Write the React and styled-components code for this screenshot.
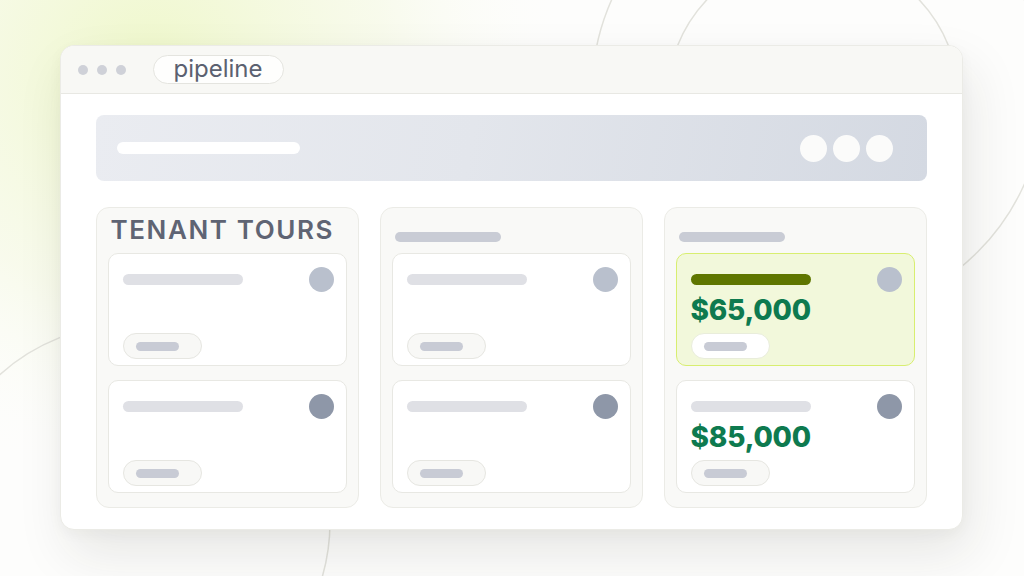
import React from "react";
import styled, { createGlobalStyle } from "styled-components";

const GlobalStyle = createGlobalStyle`
  * { box-sizing: border-box; }
  html, body { margin: 0; padding: 0; }
  body {
    font-family: Inter, "Noto Sans", "Liberation Sans", sans-serif;
    background: #fdfdfc;
  }
`;

const columns = [
  {
    title: "TENANT TOURS",
    cards: [{ dot: "#b9c0cd" }, { dot: "#8e97a8" }],
  },
  {
    cards: [{ dot: "#b9c0cd" }, { dot: "#8e97a8" }],
  },
  {
    cards: [
      { dot: "#b9c0cd", amount: "$65,000", active: true },
      { dot: "#8e97a8", amount: "$85,000" },
    ],
  },
];

const Backdrop = () => (
  <BackdropSvg viewBox="0 0 1024 576" preserveAspectRatio="none">
    <defs>
      <radialGradient id="glow" cx="150" cy="70" r="430" gradientUnits="userSpaceOnUse">
        <stop offset="0" stopColor="#edf7c4" stopOpacity="0.9" />
        <stop offset="0.55" stopColor="#f3f8dc" stopOpacity="0.5" />
        <stop offset="1" stopColor="#ffffff" stopOpacity="0" />
      </radialGradient>
    </defs>
    <rect x="0" y="0" width="1024" height="576" fill="url(#glow)" />
    <g fill="none" stroke="#e2e2dc" strokeWidth="1.5">
      <circle cx="813" cy="100" r="146" />
      <circle cx="818" cy="92" r="226" />
      <circle cx="132" cy="522" r="198" />
    </g>
  </BackdropSvg>
);

const Card = ({ dot, amount, active }) => (
  <CardBox $active={active}>
    <CardTop>
      <Bar $w={120} $h={11} $color={active ? "#5f7600" : "#dfe0e5"} />
      <Dot $size={25} $color={dot} />
    </CardTop>
    {amount && <Amount>{amount}</Amount>}
    <Chip $active={active}>
      <Bar $w={43} $h={9} $color="#c8cbd5" />
    </Chip>
  </CardBox>
);

export default function App() {
  return (
    <>
      <GlobalStyle />
      <Page>
        <Backdrop />
        <Window>
          <TitleBar>
            <Dots>
              <Dot $size={10} $color="#cfd1d8" />
              <Dot $size={10} $color="#cfd1d8" />
              <Dot $size={10} $color="#cfd1d8" />
            </Dots>
            <UrlPill>pipeline</UrlPill>
          </TitleBar>
          <Body>
            <Toolbar>
              <Bar $w={183} $h={12} $color="#ffffff" />
              <ToolbarActions>
                <Dot $size={27} $color="#fbfbfa" />
                <Dot $size={27} $color="#fbfbfa" />
                <Dot $size={27} $color="#fbfbfa" />
              </ToolbarActions>
            </Toolbar>
            <Board>
              {columns.map((col, i) => (
                <Column key={i}>
                  <ColumnHead>
                    {col.title ? (
                      <ColumnTitle>{col.title}</ColumnTitle>
                    ) : (
                      <Bar $w={106} $h={10} $color="#c9ccd5" />
                    )}
                  </ColumnHead>
                  <CardList>
                    {col.cards.map((c, j) => (
                      <Card key={j} {...c} />
                    ))}
                  </CardList>
                </Column>
              ))}
            </Board>
          </Body>
        </Window>
      </Page>
    </>
  );
}

const Page = styled.div`
  position: relative;
  width: 1024px;
  height: 576px;
  overflow: hidden;
  display: flex;
  align-items: center;
  justify-content: center;
`;

const BackdropSvg = styled.svg`
  position: absolute;
  inset: 0;
  width: 100%;
  height: 100%;
  z-index: 0;
`;

const Window = styled.div`
  position: relative;
  z-index: 1;
  width: 903px;
  height: 485px;
  margin: -1px 0 0 -2px;
  background: #ffffff;
  border: 1px solid #ebebe6;
  border-radius: 14px;
  overflow: hidden;
  display: flex;
  flex-direction: column;
  box-shadow: 8px 24px 52px rgba(40, 40, 30, 0.1), 0 4px 14px rgba(40, 40, 30, 0.04);
`;

const TitleBar = styled.div`
  height: 48px;
  flex-shrink: 0;
  display: flex;
  align-items: center;
  gap: 27px;
  padding: 0 0 0 17px;
  background: #f8f8f5;
  border-bottom: 1px solid #e8e8e3;
`;

const Dots = styled.div`
  display: flex;
  gap: 9px;
`;

const Dot = styled.span`
  display: block;
  flex-shrink: 0;
  width: ${(p) => p.$size}px;
  height: ${(p) => p.$size}px;
  border-radius: 50%;
  background: ${(p) => p.$color};
`;

const UrlPill = styled.div`
  height: 29px;
  padding: 0 20px 2px;
  display: flex;
  align-items: center;
  border: 1px solid #e4e4df;
  border-radius: 15px;
  background: #fefefd;
  color: #5b6170;
  font-size: 24px;
  line-height: 1;
`;

const Body = styled.div`
  flex: 1;
  display: flex;
  flex-direction: column;
  gap: 26px;
  padding: 21px 35px 21px;
`;

const Toolbar = styled.div`
  height: 66px;
  display: flex;
  align-items: center;
  justify-content: space-between;
  padding: 0 34px 0 21px;
  border-radius: 8px;
  background: linear-gradient(100deg, #eaecf1 0%, #e3e6ec 45%, #d4d9e2 100%);
`;

const ToolbarActions = styled.div`
  display: flex;
  gap: 6px;
`;

const Bar = styled.span`
  display: block;
  flex-shrink: 0;
  width: ${(p) => p.$w}px;
  height: ${(p) => p.$h}px;
  border-radius: ${(p) => p.$h / 2}px;
  background: ${(p) => p.$color};
`;

const Board = styled.div`
  flex: 1;
  display: grid;
  grid-template-columns: repeat(3, 1fr);
  gap: 21px;
`;

const Column = styled.div`
  display: flex;
  flex-direction: column;
  padding: 12px 11px 14px;
  background: #f9f9f7;
  border: 1px solid #ebebe6;
  border-radius: 13px;
`;

const ColumnHead = styled.div`
  height: 33px;
  display: flex;
  align-items: center;
  padding: 0 3px;
`;

const ColumnTitle = styled.h3`
  align-self: flex-start;
  margin: -3px 0 0;
  font-size: 26px;
  line-height: 26px;
  font-weight: 600;
  letter-spacing: 1.6px;
  color: #5f6473;
`;

const CardList = styled.div`
  display: flex;
  flex-direction: column;
  gap: 14px;
`;

const CardBox = styled.div`
  height: 113px;
  display: flex;
  flex-direction: column;
  padding: 13px 12px 6px 14px;
  border-radius: 10px;
  border: 1px solid ${(p) => (p.$active ? "#d8ee70" : "#e8e8e3")};
  background: ${(p) => (p.$active ? "#f2f8db" : "#ffffff")};
`;

const CardTop = styled.div`
  display: flex;
  align-items: center;
  justify-content: space-between;
`;

const Amount = styled.div`
  margin-top: 4px;
  font-size: 28px;
  line-height: 1;
  font-weight: 800;
  letter-spacing: -0.2px;
  color: #0e7a4f;
`;

const Chip = styled.div`
  margin-top: auto;
  width: 79px;
  height: 26px;
  display: flex;
  align-items: center;
  padding-left: 12px;
  border-radius: 13px;
  border: 1px solid ${(p) => (p.$active ? "#e9eddb" : "#e6e6e1")};
  background: ${(p) => (p.$active ? "#ffffff" : "#f8f8f6")};
`;
